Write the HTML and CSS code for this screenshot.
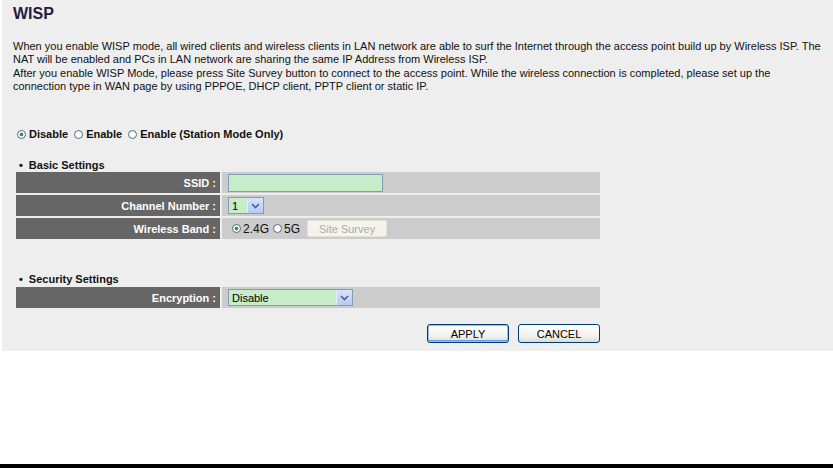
FILE: index.html
```html
<!DOCTYPE html>
<html lang="en">
<head>
    <meta charset="UTF-8">
    <meta name="viewport" content="width=device-width, initial-scale=1.0">
    <title>WISP</title>
    <link rel="stylesheet" href="styles.css">
</head>
<body>
    <div class="panel">
        <h1 class="page-title">WISP</h1>
        <p class="intro">
            When you enable WISP mode, all wired clients and wireless clients in LAN network are able to surf the Internet through the access point build up by Wireless ISP. The<br>
            NAT will be enabled and PCs in LAN network are sharing the same IP Address from Wireless ISP.<br>
            After you enable WISP Mode, please press Site Survey button to connect to the access point. While the wireless connection is completed, please set up the<br>
            connection type in WAN page by using PPPOE, DHCP client, PPTP client or static IP.
        </p>

        <div class="mode-row">
            <label><input type="radio" name="wisp" checked>Disable</label>
            <label><input type="radio" name="wisp">Enable</label>
            <label><input type="radio" name="wisp">Enable (Station Mode Only)</label>
        </div>

        <div class="section-title"><span class="bullet">&bull;</span>Basic Settings</div>
        <div class="settings">
            <div class="label">SSID :</div>
            <div class="value">
                <input type="text" class="text-field">
            </div>
            <div class="label">Channel Number :</div>
            <div class="value">
                <span class="select channel">
                    <select><option>1</option></select>
                    <span class="arrow"><svg width="9" height="6" viewBox="0 0 9 6"><path d="M1 1 L4.5 4.5 L8 1" fill="none" stroke="#4d6185" stroke-width="1.6"/></svg></span>
                </span>
            </div>
            <div class="label">Wireless Band :</div>
            <div class="value band">
                <label><input type="radio" name="band" checked>2.4G</label>
                <label><input type="radio" name="band">5G</label>
                <button class="survey" disabled>Site Survey</button>
            </div>
        </div>

        <div class="section-title security"><span class="bullet">&bull;</span>Security Settings</div>
        <div class="settings">
            <div class="label">Encryption :</div>
            <div class="value">
                <span class="select encryption">
                    <select><option>Disable</option></select>
                    <span class="arrow"><svg width="9" height="6" viewBox="0 0 9 6"><path d="M1 1 L4.5 4.5 L8 1" fill="none" stroke="#4d6185" stroke-width="1.6"/></svg></span>
                </span>
            </div>
        </div>

        <div class="actions">
            <button class="action default">APPLY</button>
            <button class="action">CANCEL</button>
        </div>
    </div>
    <div class="bottom-bar"></div>
</body>
</html>
```

FILE: styles.css
```css
body {
    margin: 0;
    height: 468px;
    overflow: hidden;
    display: flex;
    flex-direction: column;
    background: #fff;
    font-family: 'Liberation Sans', Arial, sans-serif;
    color: #111;
}

.panel {
    margin-left: 2px;
    height: 351px;
    box-sizing: border-box;
    background-color: #eeeeee;
    padding: 4px 0 0 11px;
}

.page-title {
    margin: 0;
    font-size: 16px;
    line-height: 19px;
    font-weight: bold;
    color: #1e1e40;
}

.intro {
    margin: 17px 0 0 0;
    font-size: 11px;
    line-height: 13.3px;
    white-space: nowrap;
}

.mode-row {
    margin-top: 33px;
    height: 16px;
    display: flex;
    align-items: center;
    padding-left: 4px;
    font-size: 11px;
    font-weight: bold;
}

.mode-row label,
.band label {
    display: flex;
    align-items: center;
}

.mode-row label {
    margin-right: 6px;
}

.mode-row input[type="radio"] {
    margin-right: 3px;
}

input[type="radio"] {
    appearance: none;
    -webkit-appearance: none;
    width: 9px;
    height: 9px;
    margin: 0 2px 0 0;
    border: 1px solid #4f6a86;
    border-radius: 50%;
    background: #fff;
    box-sizing: border-box;
}

input[type="radio"]:checked {
    background: radial-gradient(circle, #2c9b2c 0 1.6px, #fff 2.2px);
}

.section-title {
    margin-top: 16px;
    font-size: 11px;
    line-height: 14px;
    font-weight: bold;
    padding-left: 6px;
}

.section-title.security {
    margin-top: 33px;
    line-height: 15px;
}

.bullet {
    margin-right: 6px;
}

.settings {
    margin: 0 0 0 3px;
    display: grid;
    grid-template-columns: 204px 378px;
    grid-auto-rows: 21px;
    gap: 2px;
}

.label {
    background-color: #666666;
    color: #fff;
    font-size: 11px;
    font-weight: bold;
    display: flex;
    align-items: center;
    justify-content: flex-end;
    padding-right: 4px;
}

.value {
    background-color: #cccccc;
    display: flex;
    align-items: center;
    padding-left: 6px;
}

.text-field {
    width: 155px;
    height: 18px;
    box-sizing: border-box;
    border: 1px solid #7f9db9;
    background-color: #c6ecc9;
    margin: 0;
    padding: 0 3px;
    font: 11px 'Liberation Sans', Arial, sans-serif;
}

.select {
    display: flex;
    height: 17px;
    box-sizing: border-box;
    border: 1px solid #7f9db9;
    background-color: #c6ecc9;
}

.select select {
    appearance: none;
    -webkit-appearance: none;
    border: none;
    background: transparent;
    font: 11px 'Liberation Sans', Arial, sans-serif;
    color: #000;
    padding: 0 0 0 3px;
    margin: 0;
    outline: none;
}

.channel select {
    width: 18px;
}

.encryption select {
    width: 107px;
}

.arrow {
    width: 15px;
    display: flex;
    align-items: center;
    justify-content: center;
    background: linear-gradient(#d6e2fd, #b7cbf7);
    border-left: 1px solid #e6eefc;
}

.band {
    font-size: 12px;
    padding-left: 10px;
}

.band label {
    margin-right: 4px;
}

.survey {
    margin-left: 3px;
    width: 80px;
    height: 17px;
    padding: 0;
    border: 1px solid #e3e1d6;
    border-radius: 2px;
    background-color: #f4f3ec;
    color: #acaca8;
    font: 11px 'Liberation Sans', Arial, sans-serif;
}

.actions {
    margin-top: 16px;
    width: 587px;
    display: flex;
    justify-content: flex-end;
    gap: 9px;
}

.action {
    width: 82px;
    height: 19px;
    padding: 0;
    border: 1px solid #003c74;
    border-radius: 3px;
    background: linear-gradient(#ffffff, #f0efea 70%, #dcdad0);
    color: #000;
    font: 11px 'Liberation Sans', Arial, sans-serif;
}

.action.default {
    box-shadow: inset 0 0 0 1px #9dbcec, inset 0 -1px 0 1px #6f9de6;
}

.bottom-bar {
    margin-top: auto;
    height: 4px;
    background-color: #000;
}
```
